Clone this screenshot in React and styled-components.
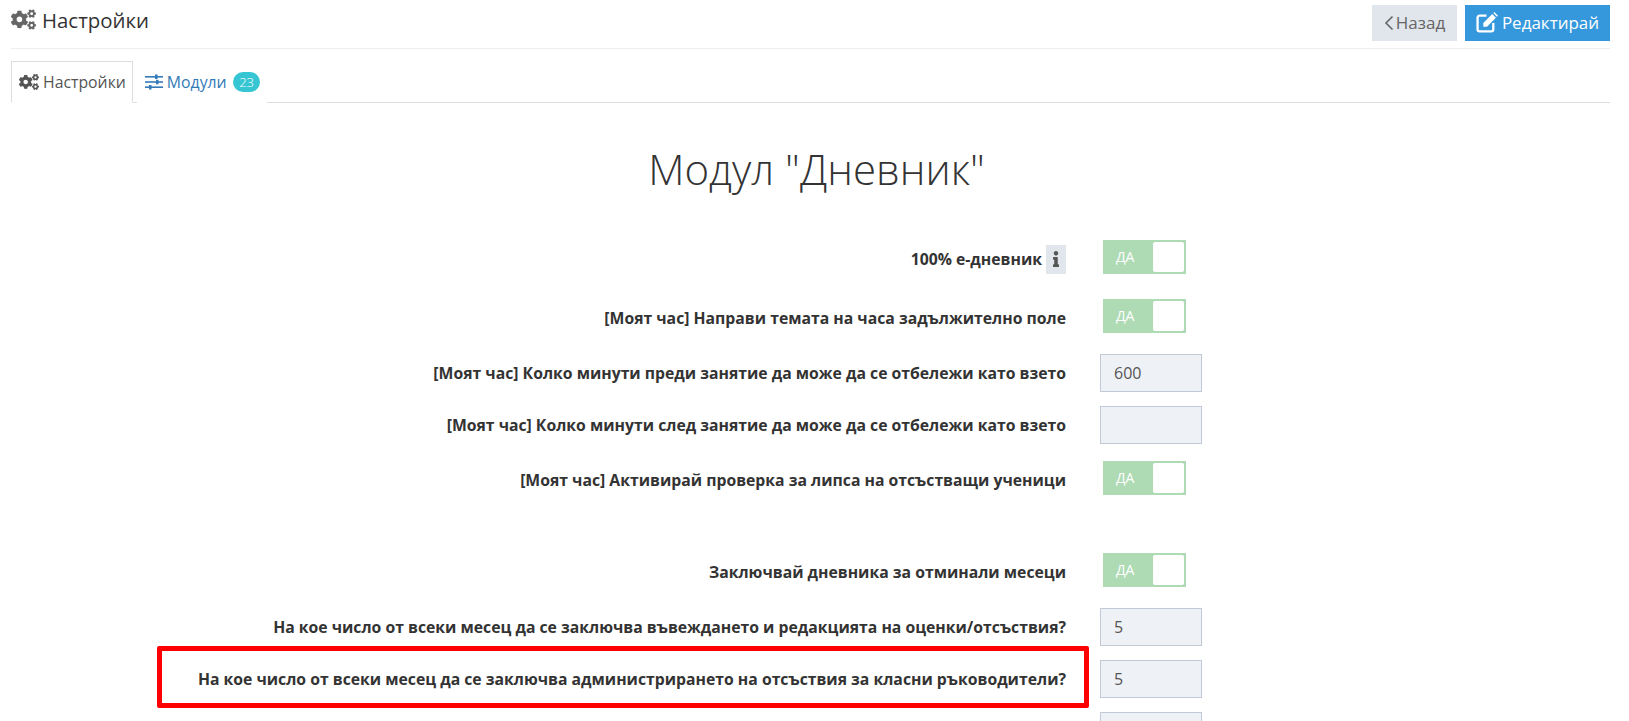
import React from "react";
import styled, {createGlobalStyle} from "styled-components";
import {FaCogs, FaInfo} from "react-icons/fa";

const GlobalStyle = createGlobalStyle`
    html, body {
        margin: 0;
        padding: 0;
        background: #fff;
        font-family: "Open Sans", sans-serif;
        color: #333;
    }
`;

const Page = styled.div`
    box-sizing: border-box;
    height: 721px;
    overflow: hidden;
    padding: 5px 19px 0 11px;
`;

const TitleBar = styled.div`
    display: flex;
    justify-content: space-between;
    align-items: flex-start;
    height: 43px;
    border-bottom: 1px solid #eee;
`;

const PageTitle = styled.div`
    display: flex;
    align-items: center;
    gap: 6px;
    height: 29px;
    font-size: 20.4px;
    color: #333;

    svg {
        color: #666;
        font-size: 25px;
    }
`;

const Actions = styled.div`
    display: flex;
    gap: 8px;
`;

const Button = styled.div`
    display: flex;
    align-items: center;
    justify-content: center;
    height: 36px;
    width: ${(p) => p.$width}px;
    padding-bottom: 1px;
    box-sizing: border-box;
    gap: ${(p) => (p.$primary ? 4 : 2)}px;
    font-size: 17px;
    color: ${(p) => (p.$primary ? "#fff" : "#666")};
    background: ${(p) => (p.$primary ? "#3598dc" : "#e1e5ec")};
`;

const Tabs = styled.div`
    display: flex;
    align-items: flex-end;
    gap: 4px;
    height: 42px;
    margin-top: 11px;
    border-bottom: 1px solid #ddd;
`;

const Tab = styled.div`
    display: flex;
    align-items: center;
    gap: 4px;
    height: 42px;
    margin-bottom: -1px;
    padding: 0 6px 1px 7px;
    font-size: 15.8px;
    box-sizing: border-box;
    color: ${(p) => (p.$active ? "#555" : "#337ab7")};
    background: #fff;
    border: 1px solid ${(p) => (p.$active ? "#ddd" : "transparent")};
    border-bottom-color: ${(p) => (p.$active ? "#fff" : "transparent")};

    svg {
        font-size: 20px;
        color: ${(p) => (p.$active ? "#555" : "#337ab7")};
    }
`;

const Badge = styled.span`
    display: inline-block;
    margin-left: 2px;
    padding: 0 6.5px;
    height: 20px;
    line-height: 20px;
    border-radius: 10px;
    background: #36c6d3;
    color: #fff;
    font-size: 13px;
    font-weight: 300;
`;

const Heading = styled.h1`
    margin: 0;
    padding: 37px 0 0 12px;
    height: 134px;
    box-sizing: border-box;
    text-align: center;
    font-size: 42px;
    line-height: 58px;
    font-weight: 300;
    color: #333;
`;

const Row = styled.div`
    position: relative;
    display: grid;
    grid-template-columns: 1055px 102px;
    column-gap: 34px;
    align-items: center;
    margin-bottom: ${(p) => p.$after || 14}px;
`;

const Label = styled.label`
    display: flex;
    justify-content: flex-end;
    align-items: center;
    gap: 4px;
    font-size: 15.75px;
    font-weight: 700;
    color: #333;
    text-align: right;
    white-space: nowrap;
`;

const InfoButton = styled.span`
    display: flex;
    align-items: center;
    justify-content: center;
    width: 20px;
    height: 29px;
    background: #e1e5ec;
    color: #555;
    font-size: 16px;
`;

const Input = styled.div`
    box-sizing: border-box;
    width: 102px;
    height: 38px;
    padding: 0 13px;
    display: flex;
    align-items: center;
    font-size: 16px;
    color: #555;
    background: #eef1f5;
    border: 1px solid #c2cad8;
`;

const ToggleBox = styled.div`
    box-sizing: border-box;
    width: 83px;
    height: 34px;
    margin: 3px 0 7px 3px;
    display: flex;
    justify-content: space-between;
    align-items: center;
    padding: 2px;
    background: #aedbb4;
`;

const ToggleText = styled.span`
    padding: 0 0 1px 11px;
    font-size: 14px;
    color: #fff;
`;

const ToggleKnob = styled.span`
    width: 31px;
    height: 30px;
    border-radius: 2px;
    background: #fff;
`;

const Highlight = styled.div`
    position: absolute;
    left: 146px;
    top: -14px;
    width: 932px;
    height: 62px;
    box-sizing: border-box;
    border: 5px solid #ff0000;
    border-radius: 2px;
`;

const Toggle = () => (
    <ToggleBox>
        <ToggleText>ДА</ToggleText>
        <ToggleKnob />
    </ToggleBox>
);

const SlidersIcon = () => (
    <svg width="18" height="16" viewBox="0 0 18 16" fill="currentColor">
        <rect x="0" y="2" width="18" height="1.6" />
        <rect x="10" y="0.5" width="2.5" height="4.5" />
        <rect x="0" y="7.2" width="18" height="1.6" />
        <rect x="11" y="5.8" width="2.5" height="4.5" />
        <rect x="0" y="12.4" width="18" height="1.6" />
        <rect x="4" y="11" width="2.5" height="4.5" />
    </svg>
);

const EditIcon = () => (
    <svg width="22" height="21" viewBox="0 0 21 20" fill="none">
        <path d="M10 3.5H3.5a2 2 0 0 0-2 2v11a2 2 0 0 0 2 2h11a2 2 0 0 0 2-2V10.5" stroke="#fff" strokeWidth="2.2" />
        <path d="M7 10.5 15.5 2l3.5 3.5-8.5 8.5H7z" fill="#fff" />
        <path d="M16.5 1l1-1 3.5 3.5-1 1z" fill="#fff" />
    </svg>
);

const BackIcon = () => (
    <svg width="10" height="16" viewBox="0 0 10 16" fill="none" stroke="#666" strokeWidth="1.6">
        <path d="M8.5 1.5 2 8l6.5 6.5" />
    </svg>
);

const App = () => {
    return (
        <Page>
            <GlobalStyle />
            <TitleBar>
                <PageTitle><FaCogs /> Настройки</PageTitle>
                <Actions>
                    <Button $width={85}><BackIcon /> Назад</Button>
                    <Button $primary $width={145}><EditIcon /> Редактирай</Button>
                </Actions>
            </TitleBar>

            <Tabs>
                <Tab $active><FaCogs /> Настройки</Tab>
                <Tab><SlidersIcon /> Модули <Badge>23</Badge></Tab>
            </Tabs>

            <Heading>Модул "Дневник"</Heading>

            <Row $after={15}>
                <Label>100% е-дневник <InfoButton><FaInfo /></InfoButton></Label>
                <Toggle />
            </Row>
            <Row>
                <Label>[Моят час] Направи темата на часа задължително поле</Label>
                <Toggle />
            </Row>
            <Row>
                <Label>[Моят час] Колко минути преди занятие да може да се отбележи като взето</Label>
                <Input>600</Input>
            </Row>
            <Row>
                <Label>[Моят час] Колко минути след занятие да може да се отбележи като взето</Label>
                <Input />
            </Row>
            <Row $after={48}>
                <Label>[Моят час] Активирай проверка за липса на отсъстващи ученици</Label>
                <Toggle />
            </Row>
            <Row>
                <Label>Заключвай дневника за отминали месеци</Label>
                <Toggle />
            </Row>
            <Row>
                <Label>На кое число от всеки месец да се заключва въвеждането и редакцията на оценки/отсъствия?</Label>
                <Input>5</Input>
            </Row>
            <Row>
                <Highlight />
                <Label>На кое число от всеки месец да се заключва администрирането на отсъствия за класни ръководители?</Label>
                <Input>5</Input>
            </Row>
            <Row>
                <Label />
                <Input />
            </Row>
        </Page>
    );
};

export default App;
